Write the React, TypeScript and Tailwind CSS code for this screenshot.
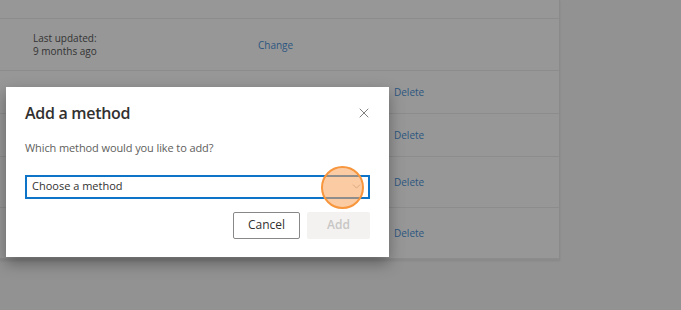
import { X, ChevronDown } from 'lucide-react';

const font = { fontFamily: '"Open Sans", "Noto Sans", sans-serif' };

function Row({ className, children }: { className: string; children?: React.ReactNode }) {
  return <div className={`flex border-b border-[#8c8c8c] ${className}`}>{children}</div>;
}

function DeleteRow({ h }: { h: string }) {
  return (
    <Row className={`${h} items-center`}>
      <span className="ml-[394px] text-[10px] text-[#2c5680]">Delete</span>
    </Row>
  );
}

export default function App() {
  return (
    <div className="relative h-[310px] w-[681px] overflow-hidden bg-[#929292]" style={font}>
      {/* dimmed page behind */}
      <div className="flex w-[560px] flex-col border-r border-b border-[#8a8a8a] bg-[#979797] shadow-[0_1px_2px_rgba(0,0,0,0.08)]">
        <Row className="h-[19px]" />
        <Row className="h-[52px] items-center">
          <div className="ml-[33px] w-[225px] pt-[1px] text-[10px] leading-[13px] text-[#333]">
            <div>Last updated:</div>
            <div>9 months ago</div>
          </div>
          <span className="pt-[1px] text-[10px] text-[#2c5680]">Change</span>
        </Row>
        <DeleteRow h="h-[43px]" />
        <DeleteRow h="h-[43px]" />
        <DeleteRow h="h-[51px]" />
        <DeleteRow h="h-[51px]" />
      </div>

      {/* dialog */}
      <div className="absolute left-[6px] top-[87px] flex h-[170px] w-[383px] flex-col bg-white px-[19px] shadow-[0_6px_14px_rgba(0,0,0,0.35)]">
        <div className="mt-[14px] flex items-center justify-between">
          <h2 className="text-[16px] font-semibold tracking-[-0.3px] text-[#323130]">Add a method</h2>
          <X size={16} strokeWidth={1.2} className="mr-[-2px] text-[#605e5c]" />
        </div>
        <p className="mt-[15px] text-[11px] tracking-[-0.1px] text-[#605e5c]">Which method would you like to add?</p>
        <div className="relative mt-[18px] flex h-[24px] items-center justify-between border-2 border-[#0e74c7] pl-[5px] pr-[5px]">
          <span className="text-[11px] text-[#323130]">Choose a method</span>
          <ChevronDown size={13} strokeWidth={1.2} className="text-[#8a8886]" />
          <div className="absolute left-[294px] top-[-11px] h-[43px] w-[43px] rounded-full border-2 border-[#f7963c] bg-[#f8a35a]/55" />
        </div>
        <div className="mt-[13px] flex justify-end gap-[7px]">
          <button type="button" className="h-[27px] w-[67px] rounded-[2px] border border-[#8a8886] text-[12px] font-medium text-[#323130]">
            Cancel
          </button>
          <button type="button" className="h-[27px] w-[63px] rounded-[2px] bg-[#f3f2f1] text-[12px] font-semibold text-[#c8c6c4]">
            Add
          </button>
        </div>
      </div>
    </div>
  );
}
